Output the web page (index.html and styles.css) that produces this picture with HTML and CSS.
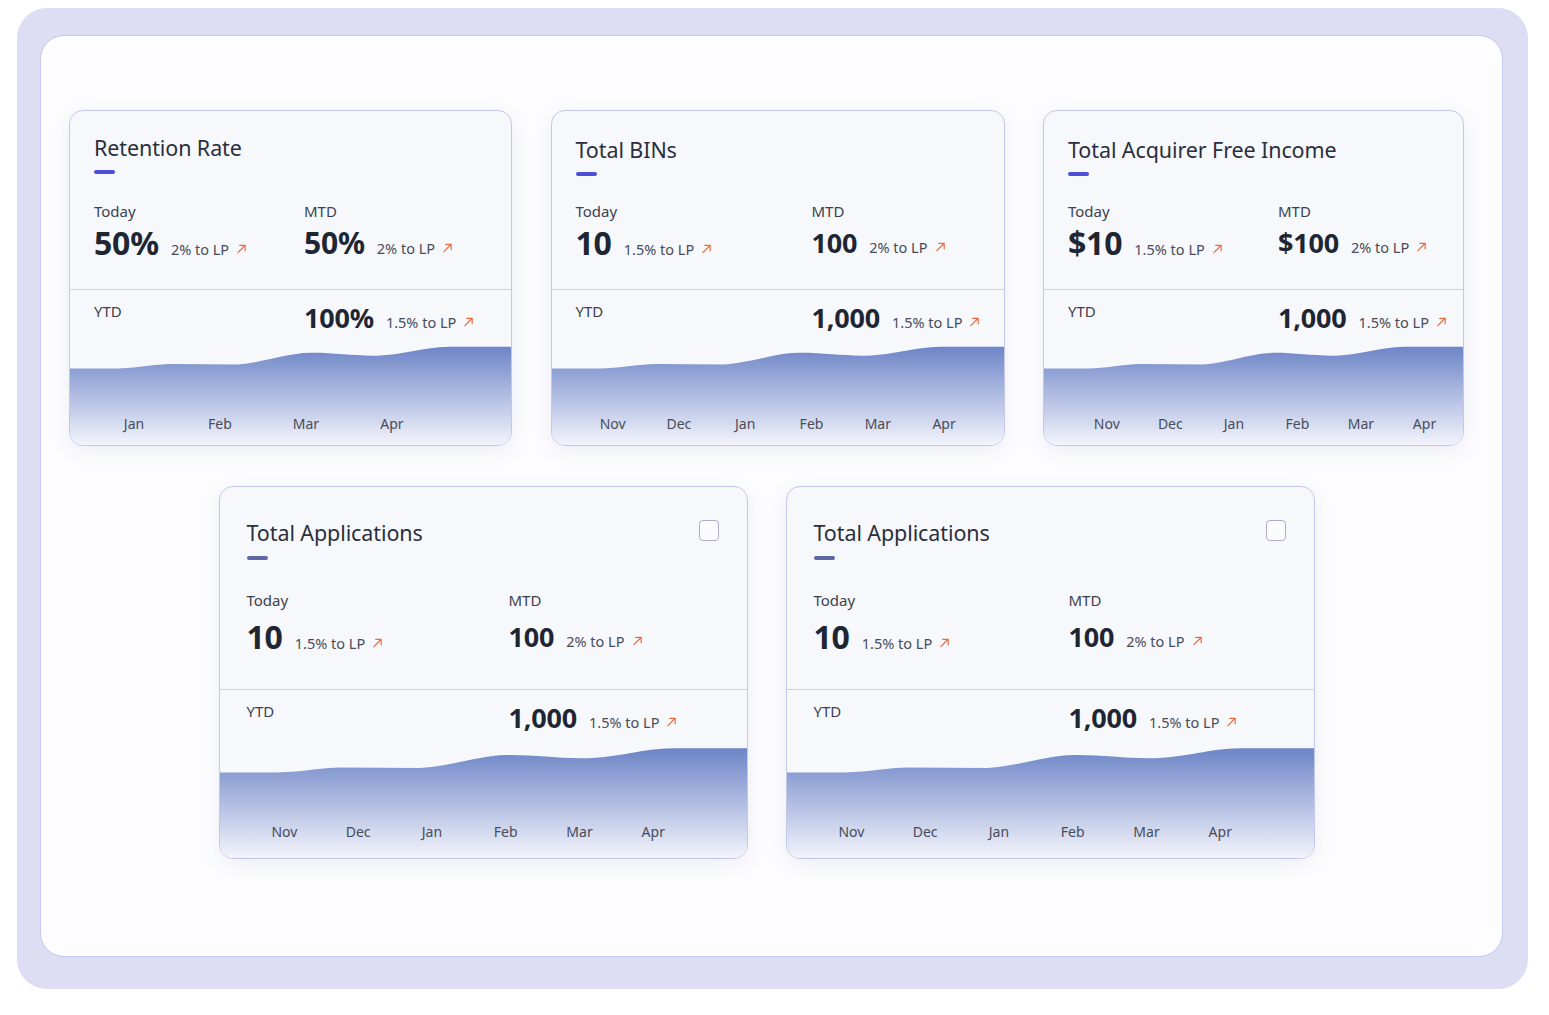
FILE: index.html
```html
<!DOCTYPE html>
<html lang="en">
<head>
<meta charset="utf-8">
<title>KPI Dashboard</title>
<link rel="stylesheet" href="styles.css">
</head>
<body>
<svg class="defs" width="0" height="0" aria-hidden="true">
  <defs>
    <linearGradient id="areaFill" x1="0" y1="0" x2="0" y2="1">
      <stop offset="0" stop-color="#6d85c7"/>
      <stop offset="0.45" stop-color="#aab7df"/>
      <stop offset="1" stop-color="#f3f4fb"/>
    </linearGradient>
    <symbol id="up" viewBox="0 0 12 12">
      <path d="M2 10.5 L10 2.5 M4 2.5 H10 V8.5" fill="none" stroke="currentColor" stroke-width="1.3" stroke-linecap="round" stroke-linejoin="round"/>
    </symbol>
    <symbol id="area" viewBox="0 0 100 100" preserveAspectRatio="none">
      <path d="M0 31 L11 31 C16 30.5 19 27.2 23 27 L38 27.5 C45 25 49 17.4 54.5 17 C60 16.8 64 19.8 69.5 19.5 C76 18.8 80 11.8 86 11.5 L100 11.5 L100 100 L0 100 Z" fill="url(#areaFill)"/>
    </symbol>
  </defs>
</svg>

<div class="frame">
  <main class="panel">
    <div class="row-top">
      <!-- Card 1 -->
      <section class="card card--retention">
        <div class="card-head">
          <div>
            <h2 class="card-title">Retention Rate</h2>
            <span class="accent"></span>
          </div>
        </div>
        <div class="stats">
          <div class="stat">
            <div class="stat-label">Today</div>
            <div class="stat-line"><span class="val val-xl">50%</span><span class="delta">2% to LP<svg class="arrow"><use href="#up"/></svg></span></div>
          </div>
          <div class="stat">
            <div class="stat-label">MTD</div>
            <div class="stat-line"><span class="val val-l">50%</span><span class="delta">2% to LP<svg class="arrow"><use href="#up"/></svg></span></div>
          </div>
        </div>
        <div class="ytd">
          <div class="ytd-row">
            <div class="stat-label">YTD</div>
            <div class="stat-line"><span class="val val-m">100%</span><span class="delta">1.5% to LP<svg class="arrow"><use href="#up"/></svg></span></div>
          </div>
          <div class="chart">
            <svg class="area" preserveAspectRatio="none"><use href="#area"/></svg>
            <div class="months months--4"><span>Jan</span><span>Feb</span><span>Mar</span><span>Apr</span></div>
          </div>
        </div>
      </section>

      <!-- Card 2 -->
      <section class="card card--bins">
        <div class="card-head">
          <div>
            <h2 class="card-title">Total BINs</h2>
            <span class="accent"></span>
          </div>
        </div>
        <div class="stats">
          <div class="stat">
            <div class="stat-label">Today</div>
            <div class="stat-line"><span class="val val-xl">10</span><span class="delta">1.5% to LP<svg class="arrow"><use href="#up"/></svg></span></div>
          </div>
          <div class="stat">
            <div class="stat-label">MTD</div>
            <div class="stat-line"><span class="val val-m">100</span><span class="delta">2% to LP<svg class="arrow"><use href="#up"/></svg></span></div>
          </div>
        </div>
        <div class="ytd">
          <div class="ytd-row">
            <div class="stat-label">YTD</div>
            <div class="stat-line"><span class="val val-m">1,000</span><span class="delta">1.5% to LP<svg class="arrow"><use href="#up"/></svg></span></div>
          </div>
          <div class="chart">
            <svg class="area" preserveAspectRatio="none"><use href="#area"/></svg>
            <div class="months"><span>Nov</span><span>Dec</span><span>Jan</span><span>Feb</span><span>Mar</span><span>Apr</span></div>
          </div>
        </div>
      </section>

      <!-- Card 3 -->
      <section class="card card--income">
        <div class="card-head">
          <div>
            <h2 class="card-title">Total Acquirer Free Income</h2>
            <span class="accent"></span>
          </div>
        </div>
        <div class="stats">
          <div class="stat">
            <div class="stat-label">Today</div>
            <div class="stat-line"><span class="val val-xl">$10</span><span class="delta">1.5% to LP<svg class="arrow"><use href="#up"/></svg></span></div>
          </div>
          <div class="stat">
            <div class="stat-label">MTD</div>
            <div class="stat-line"><span class="val val-m">$100</span><span class="delta">2% to LP<svg class="arrow"><use href="#up"/></svg></span></div>
          </div>
        </div>
        <div class="ytd">
          <div class="ytd-row">
            <div class="stat-label">YTD</div>
            <div class="stat-line"><span class="val val-m">1,000</span><span class="delta">1.5% to LP<svg class="arrow"><use href="#up"/></svg></span></div>
          </div>
          <div class="chart">
            <svg class="area" preserveAspectRatio="none"><use href="#area"/></svg>
            <div class="months"><span>Nov</span><span>Dec</span><span>Jan</span><span>Feb</span><span>Mar</span><span>Apr</span></div>
          </div>
        </div>
      </section>
    </div>

    <div class="row-bottom">
      <!-- Card 4 -->
      <section class="card card--lg">
        <div class="card-head">
          <div>
            <h2 class="card-title">Total Applications</h2>
            <span class="accent"></span>
          </div>
          <span class="checkbox" role="checkbox" aria-checked="false"></span>
        </div>
        <div class="stats">
          <div class="stat">
            <div class="stat-label">Today</div>
            <div class="stat-line"><span class="val val-xl">10</span><span class="delta">1.5% to LP<svg class="arrow"><use href="#up"/></svg></span></div>
          </div>
          <div class="stat">
            <div class="stat-label">MTD</div>
            <div class="stat-line"><span class="val val-m">100</span><span class="delta">2% to LP<svg class="arrow"><use href="#up"/></svg></span></div>
          </div>
        </div>
        <div class="ytd">
          <div class="ytd-row">
            <div class="stat-label">YTD</div>
            <div class="stat-line"><span class="val val-m">1,000</span><span class="delta">1.5% to LP<svg class="arrow"><use href="#up"/></svg></span></div>
          </div>
          <div class="chart">
            <svg class="area" preserveAspectRatio="none"><use href="#area"/></svg>
            <div class="months"><span>Nov</span><span>Dec</span><span>Jan</span><span>Feb</span><span>Mar</span><span>Apr</span></div>
          </div>
        </div>
      </section>

      <!-- Card 5 -->
      <section class="card card--lg card--lg-b">
        <div class="card-head">
          <div>
            <h2 class="card-title">Total Applications</h2>
            <span class="accent"></span>
          </div>
          <span class="checkbox" role="checkbox" aria-checked="false"></span>
        </div>
        <div class="stats">
          <div class="stat">
            <div class="stat-label">Today</div>
            <div class="stat-line"><span class="val val-xl">10</span><span class="delta">1.5% to LP<svg class="arrow"><use href="#up"/></svg></span></div>
          </div>
          <div class="stat">
            <div class="stat-label">MTD</div>
            <div class="stat-line"><span class="val val-m">100</span><span class="delta">2% to LP<svg class="arrow"><use href="#up"/></svg></span></div>
          </div>
        </div>
        <div class="ytd">
          <div class="ytd-row">
            <div class="stat-label">YTD</div>
            <div class="stat-line"><span class="val val-m">1,000</span><span class="delta">1.5% to LP<svg class="arrow"><use href="#up"/></svg></span></div>
          </div>
          <div class="chart">
            <svg class="area" preserveAspectRatio="none"><use href="#area"/></svg>
            <div class="months"><span>Nov</span><span>Dec</span><span>Jan</span><span>Feb</span><span>Mar</span><span>Apr</span></div>
          </div>
        </div>
      </section>
    </div>
  </main>
</div>
</body>
</html>
```

FILE: styles.css
```css
* { box-sizing: border-box; }

body {
  margin: 0;
  background: #ffffff;
  font-family: "Noto Sans", "Open Sans", sans-serif;
  color: #2a2f3d;
}

.defs { position: absolute; width: 0; height: 0; overflow: hidden; }

.frame {
  margin: 8px 0 0 17px;
  width: 1511px;
  height: 981px;
  background: #dddef4;
  border-radius: 30px;
  padding: 27px 25px 32px 23px;
}

.panel {
  height: 100%;
  background: #fdfdff;
  border: 1px solid #c6c8ef;
  border-radius: 24px;
  padding: 74px 38px 0 28px;
}

.row-top {
  display: grid;
  grid-template-columns: 443fr 454fr 421fr;
  column-gap: 38.5px;
}

.row-bottom {
  display: flex;
  justify-content: center;
  gap: 38px;
  margin-top: 40px;
}

.card {
  --split: 210px;
  --pad-l: 24px;
  background: #f7f8fb;
  border: 1.5px solid #c3c8ea;
  border-radius: 14px;
  box-shadow: 0 5px 20px rgba(70, 80, 130, 0.09);
  overflow: hidden;
  display: flex;
  flex-direction: column;
}

.card--bins { --split: 236px; }

.card--lg {
  --split: 262px;
  --pad-l: 27px;
  width: 529px;
}

.card--lg-b { --split: 255px; }

.card-head {
  display: flex;
  justify-content: space-between;
  align-items: flex-start;
  padding: 25px 28px 0 var(--pad-l);
}

.card--retention .card-head { padding-top: 23px; }
.card--retention .stats { padding-top: 27px; }

.card--lg .card-head { padding-top: 32px; }

.card-title {
  margin: 0;
  font-size: 21.5px;
  line-height: 28px;
  font-weight: 400;
  color: #2a2f3d;
  letter-spacing: -0.1px;
}

.accent {
  display: block;
  width: 21px;
  height: 4px;
  border-radius: 2px;
  background: #4d4fd6;
  margin-top: 8px;
}

.card--lg .accent {
  background: #5d67a6;
  margin-top: 9px;
}

.checkbox {
  display: block;
  width: 20px;
  height: 21px;
  margin-top: 1px;
  border: 1.5px solid #a9afc7;
  border-radius: 4px;
  background: #fafbfd;
}

.stats {
  display: grid;
  grid-template-columns: var(--split) 1fr;
  padding: 25px 0 28px var(--pad-l);
}

.card--lg .stats {
  padding-top: 29.5px;
  padding-bottom: 34px;
}

.stat-label {
  font-size: 15px;
  line-height: 20px;
  color: #3c414f;
}

.stat-line {
  display: flex;
  align-items: baseline;
  white-space: nowrap;
}

.stats .stat-line { margin-top: 4px; }
.card--lg .stats .stat-line { margin-top: 9.5px; }

.val {
  font-weight: 700;
  color: #1f2633;
  letter-spacing: -0.2px;
}

.val-xl { font-size: 32px; line-height: 36px; }
.val-l { font-size: 30px; line-height: 36px; }
.val-m { font-size: 27px; line-height: 36px; }

.delta {
  margin-left: 12px;
  font-size: 14.5px;
  color: #474c5a;
  display: inline-flex;
  align-items: baseline;
}

.arrow {
  width: 11px;
  height: 11px;
  margin-left: 7px;
  color: #ec6a3c;
  align-self: center;
  position: relative;
  top: -1px;
}

.ytd {
  border-top: 1.5px solid #d0d2da;
  display: flex;
  flex-direction: column;
  flex: 1;
}

.ytd-row {
  display: grid;
  grid-template-columns: var(--split) 1fr;
  padding: 12px 0 0 var(--pad-l);
  height: 44px;
}

.ytd-row .stat-line { margin-top: -2px; }
.ytd-row .stat-label { margin-top: -1px; }

.chart {
  display: grid;
  height: 111px;
}

.card--lg .chart { height: 124px; }

.chart > * { grid-area: 1 / 1; }

.area {
  width: 100%;
  height: 100%;
  display: block;
}

.months {
  align-self: end;
  display: grid;
  grid-template-columns: repeat(6, 1fr);
  width: 88%;
  margin-left: 28px;
  padding-bottom: 12px;
  font-size: 14px;
  line-height: 18px;
  color: #474c5a;
  text-align: center;
}

.card--income .months {
  width: 91%;
  margin-left: 31px;
}

.months--4 {
  grid-template-columns: repeat(4, 1fr);
  width: 78%;
  margin-left: 21px;
}

.card--lg .months {
  width: 84%;
  padding-bottom: 17px;
}
```
